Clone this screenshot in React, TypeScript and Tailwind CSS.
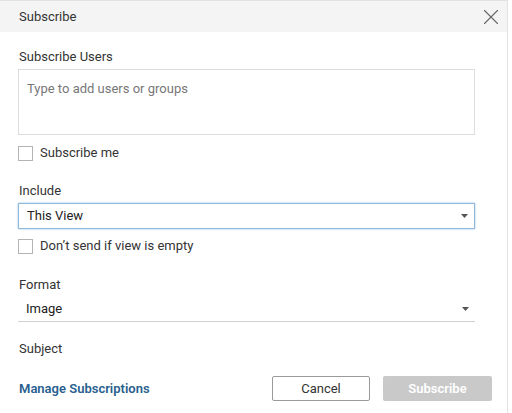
import { X } from "lucide-react";

function Caret() {
  return (
    <svg width="7" height="4" viewBox="0 0 7 4" className="shrink-0">
      <path d="M0 0h7L3.5 4z" fill="#555" />
    </svg>
  );
}

function Checkbox({ label }: { label: string }) {
  return (
    <label className="flex items-center gap-[7px] text-[13px] leading-[18px] text-[#333]">
      <span className="w-[15px] h-[15px] border border-[#b4b4b4] bg-white" />
      {label}
    </label>
  );
}

export default function App() {
  return (
    <div
      className="w-[508px] h-[413px] bg-white border-t border-r border-[#e2e2e2] text-[#333] flex flex-col"
      style={{ fontFamily: 'Roboto, Arial, sans-serif' }}
    >
      <div className="shrink-0 h-[31px] bg-[#f4f4f4] flex items-center justify-between pl-[19px] pr-[3px]">
        <span className="text-[13px] leading-[18px] text-[#333]">Subscribe</span>
        <X size={26} strokeWidth={1} className="text-[#666]" />
      </div>

      <div className="shrink-0 flex flex-col pl-[18px] w-[475px] pt-[16px]">
        <div className="text-[13px] leading-[18px] pl-[1px]">Subscribe Users</div>
        <div className="mt-[3px] h-[66px] border border-[#dcdcdc] px-[8px] pt-[10px] text-[13px] leading-[18px] text-[#777]">
          Type to add users or groups
        </div>

        <div className="mt-[9px]">
          <Checkbox label="Subscribe me" />
        </div>

        <div className="mt-[20px] text-[13px] leading-[18px] pl-[1px]">Include</div>
        <div className="mt-[3px] h-[26px] border border-[#90b8dc] shadow-[0_0_2px_#9cc4e4] flex items-center justify-between pl-[8px] pr-[6px] text-[13px] leading-[18px] text-[#222]">
          <span>This View</span>
          <Caret />
        </div>

        <div className="mt-[8px]">
          <Checkbox label="Don’t send if view is empty" />
        </div>

        <div className="mt-[21px] text-[13px] leading-[18px] pl-[1px]">Format</div>
        <div className="mt-[3px] h-[25px] border-b border-[#d0d0d0] flex items-center justify-between pl-[8px] pr-[6px] text-[13px] leading-[18px] text-[#222]">
          <span>Image</span>
          <Caret />
        </div>

        <div className="mt-[18px] text-[13px] leading-[18px] pl-[1px]">Subject</div>
      </div>

      <div className="shrink-0 flex items-center justify-between pl-[19px] pr-[15px] mt-[18px]">
        <span className="text-[13px] leading-[18px] font-semibold text-[#2a5f8f]">Manage Subscriptions</span>
        <div className="flex gap-[13px]">
          <button className="w-[98px] h-[25px] border border-[#9a9a9a] rounded-[2px] bg-white text-[13px] text-[#333]">
            Cancel
          </button>
          <button className="w-[109px] h-[25px] rounded-[2px] bg-[#c9c9c9] text-[13px] font-semibold text-white">
            Subscribe
          </button>
        </div>
      </div>
    </div>
  );
}
